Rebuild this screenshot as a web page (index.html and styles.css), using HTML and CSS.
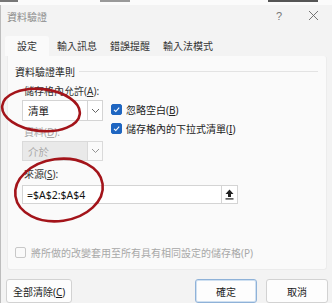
FILE: index.html
```html
<!DOCTYPE html>
<html lang="zh-Hant">
<head>
    <meta charset="UTF-8">
    <meta name="viewport" content="width=device-width, initial-scale=1.0">
    <title>資料驗證</title>
    <link rel="stylesheet" href="styles.css">
</head>
<body>
    <div class="peek"><span class="peek-a"></span><span class="peek-b"></span><span class="peek-c"></span></div>
    <div class="dialog">
        <div class="titlebar">
            <span class="title">資料驗證</span>
            <span class="help">?</span>
            <span class="close">
                <svg width="11" height="11" viewBox="0 0 11 11"><path d="M1 1 L10 10 M10 1 L1 10" stroke="#666" stroke-width="0.9" fill="none"/></svg>
            </span>
        </div>

        <div class="tabs">
            <div class="tab active">設定</div>
            <div class="tab">輸入訊息</div>
            <div class="tab">錯誤提醒</div>
            <div class="tab">輸入法模式</div>
        </div>

        <div class="panel">
            <div class="group-title"><span>資料驗證準則</span></div>

            <div class="field-label">儲存格內允許(<u>A</u>):</div>
            <div class="row">
                <div class="combo">
                    <span class="combo-value">清單</span>
                    <span class="combo-arrow">
                        <svg width="9" height="6" viewBox="0 0 9 6"><path d="M1 1 L4.5 4.5 L8 1" stroke="#555" stroke-width="0.9" fill="none"/></svg>
                    </span>
                </div>
                <div class="checks">
                    <label class="check">
                        <span class="box on"><svg width="9" height="9" viewBox="0 0 9 9"><path d="M2 4.8 L3.8 6.5 L7.2 2.6" stroke="#fff" stroke-width="1.1" fill="none"/></svg></span>
                        <span>忽略空白(<u>B</u>)</span>
                    </label>
                    <label class="check">
                        <span class="box on"><svg width="9" height="9" viewBox="0 0 9 9"><path d="M2 4.8 L3.8 6.5 L7.2 2.6" stroke="#fff" stroke-width="1.1" fill="none"/></svg></span>
                        <span>儲存格內的下拉式清單(<u>I</u>)</span>
                    </label>
                </div>
            </div>

            <div class="field-label disabled">資料(<u>D</u>):</div>
            <div class="combo off">
                <span class="combo-value">介於</span>
                <span class="combo-arrow">
                    <svg width="9" height="6" viewBox="0 0 9 6"><path d="M1 1 L4.5 4.5 L8 1" stroke="#888" stroke-width="0.9" fill="none"/></svg>
                </span>
            </div>

            <div class="field-label">來源(<u>S</u>):</div>
            <div class="source">
                <span class="source-value">=$A$2:$A$4</span>
                <span class="source-btn">
                    <svg width="9" height="11" viewBox="0 0 9 11"><path d="M4.5 0.5 L8.5 5 L6 5 L6 8 L3 8 L3 5 L0.5 5 Z" fill="#222"/><rect x="0.5" y="9.3" width="8" height="1.2" fill="#222"/></svg>
                </span>
            </div>

            <div class="spacer"></div>

            <label class="check apply">
                <span class="box"></span>
                <span>將所做的改變套用至所有具有相同設定的儲存格(P)</span>
            </label>
        </div>

        <div class="footer">
            <button class="btn">全部清除(<u>C</u>)</button>
            <div class="footer-right">
                <button class="btn primary">確定</button>
                <button class="btn">取消</button>
            </div>
        </div>

        <svg class="marks" width="332" height="303" viewBox="0 0 332 303">
            <ellipse cx="41" cy="110" rx="39" ry="21" transform="rotate(6 41 110)" fill="none" stroke="#a3141a" stroke-width="2.6"/>
            <ellipse cx="59" cy="190" rx="44" ry="31" transform="rotate(-8 59 190)" fill="none" stroke="#a3141a" stroke-width="2.6"/>
        </svg>
    </div>
</body>
</html>
```

FILE: styles.css
```css
body {
    margin: 0;
    width: 332px;
    height: 303px;
    overflow: hidden;
    background: #f3f3f3;
    font-family: "Noto Sans", "Noto Sans CJK TC", sans-serif;
    font-size: 10px;
    color: #1b1b1b;
    position: relative;
}
.peek {
    height: 5px;
    background: #fbfbfb;
    position: relative;
    overflow: hidden;
}
.peek span {
    position: absolute;
    top: 0;
    height: 2px;
    background: #777;
}
.peek-a { left: 0; width: 18px; }
.peek-b { left: 100px; width: 30px; background: #999 !important; }
.peek-c { left: 268px; width: 50px; background: #555 !important; }
.dialog {
    border-left: 1px solid #bdbdbd;
    height: 298px;
    display: flex;
    flex-direction: column;
}
.titlebar {
    height: 24px;
    display: flex;
    align-items: center;
    padding: 0 0 0 6px;
    color: #8a8a8a;
    font-size: 10px;
}
.title {
    flex: 1;
    margin-top: -2px;
}
.help {
    width: 14px;
    font-family: "Liberation Sans", sans-serif;
    font-size: 11px;
    color: #777;
    margin-right: 18px;
    margin-top: -2px;
}
.close {
    width: 24px;
    margin-top: -1px;
}
.tabs {
    display: flex;
    margin: 7px 0 0 4px;
    height: 20px;
}
.tab {
    padding: 0 6px;
    line-height: 20px;
    font-size: 10px;
    color: #333;
}
.tab + .tab {
    margin-left: 1px;
}
.tab.active {
    background: #fafafa;
    padding: 0 12px;
    margin-right: 1px;
    border-radius: 3px 3px 0 0;
}
.panel {
    margin: 0 5px 0 6px;
    height: 214px;
    background: #fafafa;
    border-radius: 0 3px 3px 3px;
    border: 1px solid #ececec;
    border-top: none;
    box-sizing: border-box;
    padding: 8px 8px 10px 7px;
    display: flex;
    flex-direction: column;
}
.group-title {
    display: flex;
    align-items: center;
    font-size: 10px;
    height: 14px;
}
.group-title::after {
    content: "";
    flex: 1;
    height: 1px;
    background: #e3e3e3;
    margin-left: 4px;
}
.field-label {
    margin: 6px 0 0 9px;
    height: 14px;
    line-height: 14px;
    color: #333;
}
.field-label.disabled {
    margin-top: 4px;
    color: #a8a8a8;
}
.row {
    display: flex;
    align-items: flex-start;
    margin-top: 2px;
}
.combo {
    margin-left: 7px;
    width: 81px;
    height: 21px;
    background: #fff;
    border: 1px solid #d4d4d4;
    box-sizing: border-box;
    display: flex;
    align-items: center;
}
.combo-value {
    flex: 1;
    padding-left: 5px;
    font-size: 10.5px;
}
.combo-arrow {
    width: 14px;
    height: 100%;
    border-left: 1px solid #d4d4d4;
    display: flex;
    align-items: center;
    justify-content: center;
}
.combo.off {
    margin-top: 2px;
    height: 20px;
    background: #e9e9e9;
    border-color: #dadada;
    color: #a8a8a8;
}
.combo.off .combo-arrow {
    background: #fafafa;
    border-left-color: #dadada;
}
.checks {
    margin-left: 8px;
    margin-top: 3px;
    height: 18px;
    display: flex;
    flex-direction: column;
    gap: 6px;
}
.check {
    display: flex;
    align-items: center;
    gap: 4px;
    height: 13px;
    flex-shrink: 0;
    color: #222;
}
.box {
    width: 11px;
    height: 11px;
    flex-shrink: 0;
    border-radius: 2px;
    box-sizing: border-box;
    border: 1px solid #9c9c9c;
    display: flex;
    align-items: center;
    justify-content: center;
}
.box.on {
    background: #1f66c1;
    border-color: #1f66c1;
}
.source {
    margin: 4px 0 0 7px;
    width: 216px;
    height: 19px;
    background: #fff;
    border: 1px solid #d4d4d4;
    box-sizing: border-box;
    display: flex;
    align-items: center;
}
.source-value {
    flex: 1;
    padding-left: 4px;
    font-size: 10.5px;
    color: #111;
}
.source-btn {
    width: 15px;
    height: 100%;
    border-left: 1px solid #d4d4d4;
    display: flex;
    align-items: center;
    justify-content: center;
}
.spacer {
    flex: 1;
}
.apply {
    color: #a8a8a8;
    gap: 5px;
}
.apply .box {
    border-color: #c8c8c8;
    background: #fafafa;
}
.footer {
    display: flex;
    justify-content: space-between;
    margin: 9px 4px 0 5px;
}
.footer-right {
    display: flex;
    gap: 9px;
}
.btn {
    font-family: "Noto Sans", "Noto Sans CJK TC", sans-serif;
    font-size: 10px;
    color: #1b1b1b;
    height: 24px;
    min-width: 62px;
    padding: 0 6px;
    background: #fdfdfd;
    border: 1px solid #d2d2d2;
    border-radius: 3px;
}
.btn.primary {
    border-color: #8fb2d8;
    box-shadow: inset 0 0 0 1px #cfe0f1;
}
.marks {
    position: absolute;
    left: 0;
    top: 0;
    pointer-events: none;
}
```
